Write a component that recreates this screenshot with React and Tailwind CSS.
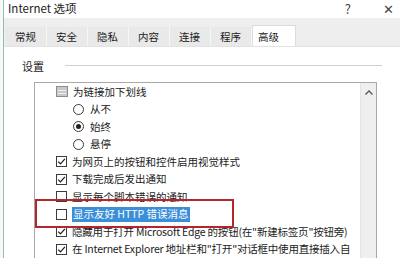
import React from 'react';

const font = { fontFamily: '"Noto Sans CJK SC", "Noto Sans", sans-serif' };

const tabs = ['常规', '安全', '隐私', '内容', '连接', '程序', '高级'];

const Check = ({ checked }) => (
  <span className="w-[11px] h-[11px] border border-[#3c3c3c] bg-white flex items-center justify-center shrink-0">
    {checked && (
      <svg width="9" height="9" viewBox="0 0 9 9">
        <path d="M1.2 4.6 L3.5 6.9 L7.9 1.8" fill="none" stroke="#222" strokeWidth="1.3" />
      </svg>
    )}
  </span>
);

const Radio = ({ checked }) => (
  <span className="w-[11px] h-[11px] rounded-full border border-[#3c3c3c] bg-white flex items-center justify-center shrink-0">
    {checked && <span className="w-[5px] h-[5px] rounded-full bg-[#222]" />}
  </span>
);

const GroupIcon = () => (
  <span className="w-[12px] h-[11px] border border-[#8c8c8c] bg-[#c9c9c9] flex flex-col justify-center gap-[2px] px-[1px] shrink-0">
    <span className="h-[1px] bg-[#eeeeee]" />
    <span className="h-[1px] bg-[#eeeeee]" />
  </span>
);

const Row = ({ children, indent }) => (
  <div className={`h-[17.5px] flex items-center gap-[5px] whitespace-nowrap ${indent}`}>{children}</div>
);

export default function App() {
  return (
    <div className="relative w-[400px] h-[258px] overflow-hidden bg-[#f8f8f8] pl-[3px] text-[#1b1b1b]" style={font}>
      <div className="h-full border-l border-[#8fbfae] bg-white flex flex-col">
        {/* title bar */}
        <div className="h-[18px] flex items-center pl-[4px] text-[11.5px] leading-none">
          <span>Internet 选项</span>
          <span className="ml-auto mr-[32px] text-[13px] text-[#444]">?</span>
          <span className="mr-[6px] text-[13px] text-[#444]">✕</span>
        </div>

        {/* tabs */}
        <div className="h-[30px] bg-[#eeeeee] flex items-end pl-[2px] border-b border-[#e2e2e2]">
          {tabs.map((t) =>
            t === '高级' ? (
              <div key={t} className="w-[44px] h-[21px] bg-white border-x border-t border-[#dcdcdc] flex items-center pl-[5px] pt-[2px] text-[10.5px] leading-none">
                {t}
              </div>
            ) : (
              <div key={t} className="w-[41px] h-[19px] bg-[#e9e9e9] border-r border-[#f7f7f7] flex items-center pl-[9px] pt-[2px] text-[10.5px] leading-none">
                {t}
              </div>
            )
          )}
        </div>

        {/* group header */}
        <div className="pt-[12px] h-[26px] flex items-center pl-[18px] text-[11px] leading-none">
          <span>设置</span>
          <span className="flex-1 ml-[21px] mr-[18px] h-[2px] border-t border-[#cfcfcf] bg-white" />
        </div>

        {/* list box */}
        <div className="mt-[9px] ml-[30px] w-[343px] flex-1 border-l border-r border-t border-[#a8a8a8] flex text-[10.5px] leading-none">
          <div className="flex-1 overflow-hidden">
            <Row indent="pl-[21px]">
              <GroupIcon />
              <span>为链接加下划线</span>
            </Row>
            <Row indent="pl-[38px] gap-[6px]">
              <Radio />
              <span>从不</span>
            </Row>
            <Row indent="pl-[38px] gap-[6px]">
              <Radio checked />
              <span>始终</span>
            </Row>
            <Row indent="pl-[38px] gap-[6px]">
              <Radio />
              <span>悬停</span>
            </Row>
            <Row indent="pl-[21px]">
              <Check checked />
              <span>为网页上的按钮和控件启用视觉样式</span>
            </Row>
            <Row indent="pl-[21px]">
              <Check checked />
              <span>下载完成后发出通知</span>
            </Row>
            <Row indent="pl-[21px]">
              <Check />
              <span>显示每个脚本错误的通知</span>
            </Row>
            <Row indent="pl-[21px]">
              <Check />
              <span className="bg-[#3b8fd8] text-white h-[15px] flex items-center px-[1px]">显示友好 HTTP 错误消息</span>
            </Row>
            <Row indent="pl-[21px]">
              <Check checked />
              <span className="tracking-[-0.2px]">隐藏用于打开 Microsoft Edge 的按钮(在"新建标签页"按钮旁)</span>
            </Row>
            <Row indent="pl-[21px]">
              <Check checked />
              <span className="tracking-[-0.2px]">在 Internet Explorer 地址栏和"打开"对话框中使用直接插入自</span>
            </Row>
          </div>
          <div className="w-[16px] bg-[#efefef] border-l border-[#e4e4e4] flex justify-center pt-[7px]">
            <svg width="8" height="5" viewBox="0 0 8 5">
              <path d="M0.5 4.5 L4 1 L7.5 4.5" fill="none" stroke="#555" strokeWidth="1.3" />
            </svg>
          </div>
        </div>
      </div>

      {/* red highlight box */}
      <div className="absolute left-[35px] top-[199px] w-[199px] h-[29px] border-2 border-[#b3262b]" />
    </div>
  );
}
